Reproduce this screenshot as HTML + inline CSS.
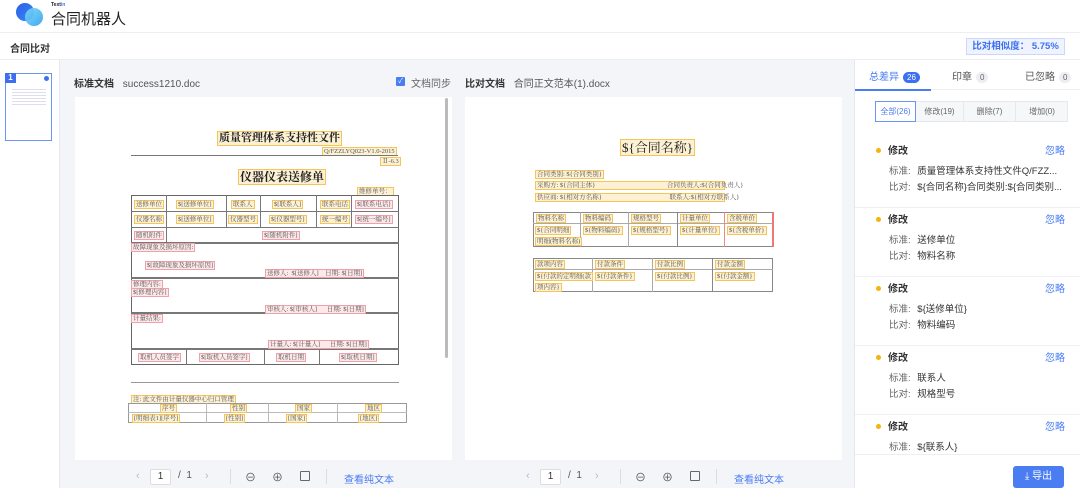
<!DOCTYPE html>
<html><head><meta charset="utf-8"><style>
*{margin:0;padding:0;box-sizing:border-box}
body{width:1080px;height:488px;overflow:hidden;background:#fff;font-family:"Liberation Sans","Noto Sans CJK SC",sans-serif;color:#333;position:relative}
.a{position:absolute}
.hl{border:1px solid #f5c45a;background:#fdf1d4;white-space:nowrap;font-family:"Liberation Serif","Noto Serif CJK SC",serif;color:#555}
.rd{border:1px solid #f0a0a8;background:#fde8ea;white-space:nowrap;font-family:"Liberation Serif","Noto Serif CJK SC",serif;color:#555}
.s{font-size:6.5px;line-height:7px;padding:0 1px}
.ln{position:absolute;background:#777}
.tab{font-size:10px;color:#555}
.badge{display:inline-block;background:#eceef2;color:#666;border-radius:7px;font-size:8px;padding:0 4px;line-height:11px;margin-left:4px}
.item .t{font-size:10px;font-weight:bold;color:#333}
.item{position:absolute;left:855px;width:225px;height:69px;border-bottom:1px solid #eef0f4}
.dot{position:absolute;left:21px;top:9px;width:5px;height:5px;border-radius:50%;background:#f6b30d}
.row{position:absolute;left:34px;font-size:9.5px;color:#666;white-space:nowrap}
.row b{font-weight:normal;color:#333;margin-left:4px}
</style></head><body>
<div class="a" style="left:0;top:0;width:1080px;height:33px;border-bottom:1px solid #eceef2"></div>
<div class="a" style="left:16px;top:3px;width:18px;height:18px;border-radius:50%;background:linear-gradient(135deg,#2a5fe8,#3a8cf2)"></div>
<div class="a" style="left:25px;top:8px;width:18px;height:18px;border-radius:50%;background:linear-gradient(135deg,#7fd8f8,#2fa0ee);opacity:.92"></div>
<div class="a" style="left:51px;top:2px;font-size:5px;font-weight:bold;color:#223">Text<span style="color:#3a7cf2">in</span></div>
<div class="a" style="left:51px;top:8px;font-size:15px;color:#222">合同机器人</div>
<div class="a" style="left:10px;top:40px;font-size:10px;font-weight:bold;color:#333">合同比对</div>
<div class="a" style="left:966px;top:38px;width:99px;height:17px;border:1px solid #c9d8fb;background:#eef3fe;color:#3d6ff0;font-size:9.5px;font-weight:bold;line-height:15px;text-align:center">比对相似度：&nbsp;5.75%</div>
<div class="a" style="left:0;top:59px;width:1080px;height:1px;background:#eceef2"></div>
<div class="a" style="left:59px;top:60px;width:1px;height:428px;background:#e6e8ee"></div>
<div class="a" style="left:5px;top:73px;width:47px;height:68px;border:1px solid #6b95f5;background:#fff"></div>
<div class="a" style="left:5px;top:73px;width:11px;height:10px;background:#3d6ff0;color:#fff;font-size:8px;font-weight:bold;text-align:center;line-height:10px">1</div>
<div class="a" style="left:44px;top:76px;width:5px;height:5px;border-radius:50%;background:#3d6ff0"></div>
<div class="a" style="left:12px;top:87px;width:34px;height:20px;background:repeating-linear-gradient(#fff 0 2px,#dde 2px 3px)"></div>
<div class="a" style="left:60px;top:60px;width:794px;height:428px;background:#f4f5f9"></div>
<div class="a" style="left:74px;top:75px;font-size:10px;font-weight:bold;color:#333">标准文档 <span style="font-weight:normal;color:#555;margin-left:6px">success1210.doc</span></div>
<div class="a" style="left:396px;top:77px;width:9px;height:9px;background:#4a7cf2;border-radius:1px;color:#fff;font-size:7px;line-height:9px;text-align:center">✓</div>
<div class="a" style="left:411px;top:75px;font-size:10px;color:#666">文档同步</div>
<div class="a" style="left:465px;top:75px;font-size:10px;font-weight:bold;color:#333">比对文档 <span style="font-weight:normal;color:#555;margin-left:6px">合同正文范本(1).docx</span></div>
<div class="a" style="left:75px;top:97px;width:377px;height:363px;background:#fff"></div>
<div class="a" style="left:445px;top:98px;width:3px;height:260px;background:#bbb;border-radius:2px"></div>
<div class="a hl" style="left:217px;top:131px;font-size:11px;font-weight:bold;line-height:13px;padding:0 1px;color:#222">质量管理体系支持性文件</div>
<div class="a hl s" style="left:322px;top:147px">Q/FZZLYQ023-V1.0-2015</div>
<div class="ln" style="left:131px;top:155px;width:267px;height:1px"></div>
<div class="a hl s" style="left:380px;top:157px">Ⅱ-6.3</div>
<div class="a hl" style="left:238px;top:169px;font-size:12px;font-weight:bold;line-height:14px;padding:0 1px;color:#222">仪器仪表送修单</div>
<div class="a hl s" style="left:357px;top:187px">维修单号：</div>
<div class="a" style="left:131px;top:195px;width:268px;height:170px;border:1.5px solid #666"></div>
<div class="ln" style="left:131px;top:211px;width:268px;height:1px"></div>
<div class="ln" style="left:131px;top:227px;width:268px;height:1px"></div>
<div class="ln" style="left:131px;top:242px;width:268px;height:1.5px"></div>
<div class="ln" style="left:131px;top:277px;width:268px;height:1.5px"></div>
<div class="ln" style="left:131px;top:312px;width:268px;height:1.5px"></div>
<div class="ln" style="left:131px;top:348px;width:268px;height:1.5px"></div>
<div class="ln" style="left:166px;top:195px;width:1px;height:47px"></div>
<div class="ln" style="left:226px;top:195px;width:1px;height:32px"></div>
<div class="ln" style="left:260px;top:195px;width:1px;height:32px"></div>
<div class="ln" style="left:316px;top:195px;width:1px;height:32px"></div>
<div class="ln" style="left:351px;top:195px;width:1px;height:32px"></div>
<div class="ln" style="left:186px;top:348px;width:1px;height:17px"></div>
<div class="ln" style="left:264px;top:348px;width:1px;height:17px"></div>
<div class="ln" style="left:319px;top:348px;width:1px;height:17px"></div>
<div class="a hl s" style="left:134px;top:200px">送修单位</div>
<div class="a hl s" style="left:176px;top:200px">$[送修单位]</div>
<div class="a hl s" style="left:231px;top:200px">联系人</div>
<div class="a hl s" style="left:272px;top:200px">$[联系人]</div>
<div class="a hl s" style="left:320px;top:200px">联系电话</div>
<div class="a rd s" style="left:355px;top:200px">$[联系电话]</div>
<div class="a hl s" style="left:134px;top:215px">仪器名称</div>
<div class="a hl s" style="left:176px;top:215px">$[送修单位]</div>
<div class="a hl s" style="left:228px;top:215px">仪器型号</div>
<div class="a hl s" style="left:269px;top:215px">$[仪器型号]</div>
<div class="a hl s" style="left:320px;top:215px">统一编号</div>
<div class="a rd s" style="left:355px;top:215px">$[统一编号]</div>
<div class="a rd s" style="left:134px;top:231px">随机附件</div>
<div class="a rd s" style="left:262px;top:231px">$[随机附件]</div>
<div class="a rd s" style="left:131px;top:243px">故障现象及损坏原因:</div>
<div class="a rd s" style="left:145px;top:261px">$[故障现象及损坏原因]</div>
<div class="a rd s" style="left:265px;top:269px">送修人: &nbsp;$[送修人] &nbsp;&nbsp;&nbsp;日期: $[日期]</div>
<div class="a rd s" style="left:131px;top:280px">修理内容:</div>
<div class="a rd s" style="left:131px;top:288px">$[修理内容]</div>
<div class="a rd s" style="left:265px;top:305px">审核人: $[审核人] &nbsp;&nbsp;&nbsp;&nbsp;&nbsp;日期: $[日期]</div>
<div class="a rd s" style="left:131px;top:314px">计量结果:</div>
<div class="a rd s" style="left:268px;top:340px">计量人: $[计量人] &nbsp;&nbsp;&nbsp;&nbsp;&nbsp;日期: $[日期]</div>
<div class="a rd s" style="left:138px;top:353px">取机人员签字</div>
<div class="a rd s" style="left:199px;top:353px">$[取机人员签字]</div>
<div class="a rd s" style="left:276px;top:353px">取机日期</div>
<div class="a rd s" style="left:339px;top:353px">$[取机日期]</div>
<div class="ln" style="left:131px;top:382px;width:268px;height:1px;background:#999"></div>
<div class="a hl s" style="left:131px;top:395px">注: 此文件由计量仪器中心归口管理</div>
<div class="a" style="left:128px;top:403px;width:279px;height:20px;border:1px solid #999"></div>
<div class="ln" style="left:128px;top:412px;width:279px;height:1px;background:#bbb"></div>
<div class="ln" style="left:206px;top:403px;width:1px;height:20px;background:#bbb"></div>
<div class="ln" style="left:268px;top:403px;width:1px;height:20px;background:#bbb"></div>
<div class="ln" style="left:337px;top:403px;width:1px;height:20px;background:#bbb"></div>
<div class="a hl s" style="left:160px;top:404px">序号</div>
<div class="a hl s" style="left:230px;top:404px">性别</div>
<div class="a hl s" style="left:295px;top:404px">国家</div>
<div class="a hl s" style="left:365px;top:404px">地区</div>
<div class="a hl s" style="left:132px;top:414px">[明细表1][序号]</div>
<div class="a hl s" style="left:224px;top:414px">[性别]</div>
<div class="a hl s" style="left:286px;top:414px">[国家]</div>
<div class="a hl s" style="left:358px;top:414px">[地区]</div>
<div class="a" style="left:465px;top:97px;width:377px;height:363px;background:#fff"></div>
<div class="a hl" style="left:620px;top:139px;font-size:13px;line-height:15px;padding:0 1px;color:#222">${合同名称}</div>
<div class="a hl s" style="left:535px;top:170px">合同类别: ${合同类别}</div>
<div class="a hl s" style="left:535px;top:181px;width:190px">采购方: ${合同主体} <span style="margin-left:70px">合同负责人:${合同负责人}</span></div>
<div class="a hl s" style="left:535px;top:193px;width:190px">供应商: ${相对方名称} <span style="margin-left:66px">联系人:${相对方联系人}</span></div>
<div class="a" style="left:533px;top:212px;width:240px;height:35px;border:1px solid #888"></div>
<div class="ln" style="left:533px;top:223px;width:240px;height:1px;background:#aaa"></div>
<div class="ln" style="left:580px;top:212px;width:1px;height:35px;background:#aaa"></div>
<div class="ln" style="left:628px;top:212px;width:1px;height:35px;background:#aaa"></div>
<div class="ln" style="left:677px;top:212px;width:1px;height:35px;background:#888"></div>
<div class="ln" style="left:724px;top:212px;width:1px;height:35px;background:#e88"></div>
<div class="ln" style="left:772px;top:212px;width:1.5px;height:35px;background:#e77"></div>
<div class="a hl s" style="left:536px;top:214px">物料名称</div>
<div class="a hl s" style="left:583px;top:214px">物料编码</div>
<div class="a hl s" style="left:631px;top:214px">规格型号</div>
<div class="a hl s" style="left:680px;top:214px">计量单位</div>
<div class="a hl s" style="left:727px;top:214px">含税单价</div>
<div class="a hl s" style="left:535px;top:226px">${合同明细</div>
<div class="a hl s" style="left:535px;top:237px">明细(物料名称)</div>
<div class="a hl s" style="left:583px;top:226px">${物料编码}</div>
<div class="a hl s" style="left:631px;top:226px">${规格型号}</div>
<div class="a hl s" style="left:680px;top:226px">${计量单位}</div>
<div class="a hl s" style="left:727px;top:226px">${含税单价}</div>
<div class="a" style="left:533px;top:258px;width:240px;height:34px;border:1px solid #888"></div>
<div class="ln" style="left:533px;top:269px;width:240px;height:1px;background:#aaa"></div>
<div class="ln" style="left:592px;top:258px;width:1px;height:34px;background:#aaa"></div>
<div class="ln" style="left:652px;top:258px;width:1px;height:34px;background:#aaa"></div>
<div class="ln" style="left:712px;top:258px;width:1px;height:34px;background:#888"></div>
<div class="a hl s" style="left:535px;top:260px">款项内容</div>
<div class="a hl s" style="left:595px;top:260px">付款条件</div>
<div class="a hl s" style="left:655px;top:260px">付款比例</div>
<div class="a hl s" style="left:715px;top:260px">付款金额</div>
<div class="a hl s" style="left:535px;top:272px">${付款的定明细(款</div>
<div class="a hl s" style="left:535px;top:283px">项内容}</div>
<div class="a hl s" style="left:595px;top:272px">${付款条件}</div>
<div class="a hl s" style="left:655px;top:272px">${付款比例}</div>
<div class="a hl s" style="left:715px;top:272px">${付款金额}</div>
<div class="a" style="left:136px;top:470px;font-size:11px;color:#bbb">‹</div>
<div class="a" style="left:150px;top:469px;width:21px;height:16px;border:1px solid #ddd;border-radius:2px;background:#fff;font-size:10px;text-align:center;line-height:14px">1</div>
<div class="a" style="left:178px;top:470px;font-size:10px;color:#555">/ &nbsp;1</div>
<div class="a" style="left:205px;top:470px;font-size:11px;color:#bbb">›</div>
<div class="a" style="left:230px;top:469px;width:1px;height:15px;background:#ddd"></div>
<div class="a" style="left:245px;top:469px;font-size:11px;color:#555">⊖</div>
<div class="a" style="left:272px;top:469px;font-size:11px;color:#555">⊕</div>
<div class="a" style="left:300px;top:471px;width:10px;height:10px;border:1px solid #666;border-radius:1px"></div>
<div class="a" style="left:326px;top:469px;width:1px;height:15px;background:#ddd"></div>
<div class="a" style="left:344px;top:471px;font-size:10px;color:#4a7cf2">查看纯文本</div>
<div class="a" style="left:526px;top:470px;font-size:11px;color:#bbb">‹</div>
<div class="a" style="left:540px;top:469px;width:21px;height:16px;border:1px solid #ddd;border-radius:2px;background:#fff;font-size:10px;text-align:center;line-height:14px">1</div>
<div class="a" style="left:568px;top:470px;font-size:10px;color:#555">/ &nbsp;1</div>
<div class="a" style="left:595px;top:470px;font-size:11px;color:#bbb">›</div>
<div class="a" style="left:620px;top:469px;width:1px;height:15px;background:#ddd"></div>
<div class="a" style="left:635px;top:469px;font-size:11px;color:#555">⊖</div>
<div class="a" style="left:662px;top:469px;font-size:11px;color:#555">⊕</div>
<div class="a" style="left:690px;top:471px;width:10px;height:10px;border:1px solid #666;border-radius:1px"></div>
<div class="a" style="left:716px;top:469px;width:1px;height:15px;background:#ddd"></div>
<div class="a" style="left:734px;top:471px;font-size:10px;color:#4a7cf2">查看纯文本</div>
<div class="a" style="left:854px;top:60px;width:1px;height:428px;background:#e6e8ee"></div>
<div class="a tab" style="left:869px;top:68px;color:#4a7cf2">总差异<span class="badge" style="background:#3d6ff0;color:#fff">26</span></div>
<div class="a tab" style="left:952px;top:68px">印章<span class="badge">0</span></div>
<div class="a tab" style="left:1025px;top:68px">已忽略<span class="badge">0</span></div>
<div class="a" style="left:855px;top:89px;width:225px;height:1px;background:#eceef2"></div>
<div class="a" style="left:855px;top:89px;width:76px;height:2px;background:#4a7cf2"></div>
<div class="a" style="left:875px;top:101px;width:41px;height:21px;border:1px solid #6b95f5;font-size:8px;color:#4a7cf2;text-align:center;line-height:19px;background:#fff">全部(26)</div>
<div class="a" style="left:916px;top:101px;width:152px;height:21px;border:1px solid #e6e8ee;border-left:none;background:#f6f7f9"></div>
<div class="a" style="left:916px;top:101px;width:47px;height:21px;font-size:8px;color:#666;text-align:center;line-height:21px">修改(19)</div>
<div class="a" style="left:963px;top:101px;width:1px;height:21px;background:#e6e8ee"></div>
<div class="a" style="left:964px;top:101px;width:51px;height:21px;font-size:8px;color:#666;text-align:center;line-height:21px">删除(7)</div>
<div class="a" style="left:1015px;top:101px;width:1px;height:21px;background:#e6e8ee"></div>
<div class="a" style="left:1016px;top:101px;width:52px;height:21px;font-size:8px;color:#666;text-align:center;line-height:21px">增加(0)</div>
<div class="item" style="top:139px"><div class="dot"></div><div class="a t" style="left:33px;top:3px">修改</div><div class="a" style="right:15px;top:3px;font-size:10px;color:#4a7cf2">忽略</div><div class="row" style="top:24px">标准: <b>质量管理体系支持性文件Q/FZZ...</b></div><div class="row" style="top:40px">比对: <b>${合同名称}合同类别:${合同类别...</b></div></div>
<div class="item" style="top:208px"><div class="dot"></div><div class="a t" style="left:33px;top:3px">修改</div><div class="a" style="right:15px;top:3px;font-size:10px;color:#4a7cf2">忽略</div><div class="row" style="top:24px">标准: <b>送修单位</b></div><div class="row" style="top:40px">比对: <b>物料名称</b></div></div>
<div class="item" style="top:277px"><div class="dot"></div><div class="a t" style="left:33px;top:3px">修改</div><div class="a" style="right:15px;top:3px;font-size:10px;color:#4a7cf2">忽略</div><div class="row" style="top:24px">标准: <b>${送修单位}</b></div><div class="row" style="top:40px">比对: <b>物料编码</b></div></div>
<div class="item" style="top:346px"><div class="dot"></div><div class="a t" style="left:33px;top:3px">修改</div><div class="a" style="right:15px;top:3px;font-size:10px;color:#4a7cf2">忽略</div><div class="row" style="top:24px">标准: <b>联系人</b></div><div class="row" style="top:40px">比对: <b>规格型号</b></div></div>
<div class="item" style="top:415px;height:40px;border:none;overflow:hidden"><div class="dot"></div><div class="a t" style="left:33px;top:3px">修改</div><div class="a" style="right:15px;top:3px;font-size:10px;color:#4a7cf2">忽略</div><div class="row" style="top:24px">标准: <b>${联系人}</b></div></div>
<div class="a" style="left:855px;top:454px;width:225px;height:34px;background:#fff;border-top:1px solid #eceef2"></div>
<div class="a" style="left:1013px;top:466px;width:51px;height:22px;background:#4a7cf2;border-radius:3px;color:#fff;font-size:10px;text-align:center;line-height:22px">⤓ 导出</div>
</body></html>
